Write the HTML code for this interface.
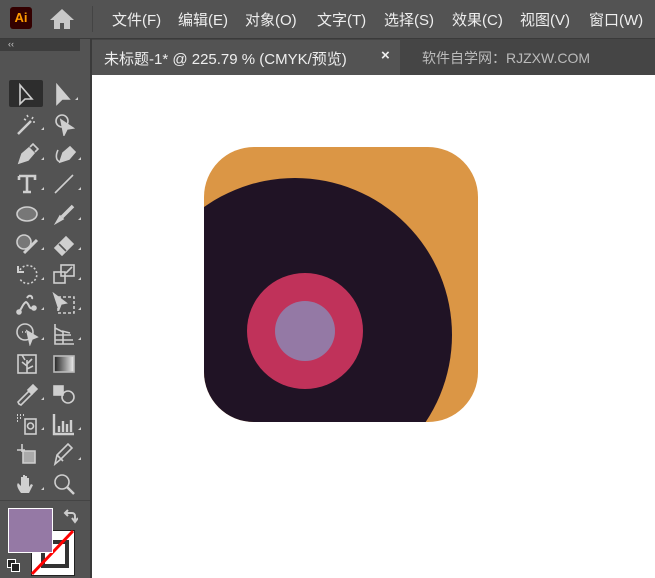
<!DOCTYPE html><html><head><style>
body{margin:0;width:655px;height:578px;overflow:hidden;background:#fff;font-family:"Liberation Sans","Noto Sans CJK SC",sans-serif;position:relative}
.mb{position:absolute;left:0;top:0;width:655px;height:38px;background:#535353;border-bottom:1px solid #3a3a3a}
.mb span{position:absolute;top:9px;color:#eee;font-size:15px}
.tb{position:absolute;left:0;top:39px;width:655px;height:36px;background:#454545}
.tab{position:absolute;left:92px;top:40px;width:308px;height:35px;background:#535353;color:#eee;font-size:15px}
.tools{position:absolute;left:0;top:39px;width:90px;height:539px;background:#535353;border-right:2px solid #3a3a3a}
.t{position:absolute;width:24px;height:24px}
.t svg{width:24px;height:24px;fill:none;stroke:#cfcfcf;stroke-width:1.6}
</style></head><body>
<div class="mb">
<div style="position:absolute;left:10px;top:7px;width:22px;height:22px;background:#330000;border-radius:3px;color:#ff9a00;font-size:13px;font-weight:bold;text-align:center;line-height:22px">Ai</div>
<svg style="position:absolute;left:49px;top:8px" width="26" height="22"><path d="M13 1L1 12h4v9h6v-6h4v6h6v-9h4z" fill="#c8c8c8"/></svg>
<div style="position:absolute;left:92px;top:6px;width:1px;height:26px;background:#444"></div>
<span style="left:112px">文件(F)</span><span style="left:178px">编辑(E)</span><span style="left:245px">对象(O)</span><span style="left:317px">文字(T)</span><span style="left:384px">选择(S)</span><span style="left:452px">效果(C)</span><span style="left:520px">视图(V)</span><span style="left:589px">窗口(W)</span>
</div>
<div class="tb"></div>
<div class="tab"><span style="position:absolute;left:12px;top:8px">未标题-1* @ 225.79 % (CMYK/预览)</span><span style="position:absolute;left:289px;top:7px;font-weight:bold">×</span></div>
<div style="position:absolute;left:422px;top:48px;color:#bbb;font-size:14px">软件自学网：RJZXW.COM</div>
<div class="tools">
<div style="position:absolute;left:0;top:0;width:72px;height:12px;background:#3d3d3d;color:#ccc;font-size:9px;padding-left:8px">‹‹</div>
<div style="position:absolute;left:9px;top:41px;width:34px;height:27px;background:#2d2d2d;border-radius:2px"></div>
</div>
<!-- tools: rows at y=95+30i, cols x 27 / 64 -->
<div class="t" style="left:15px;top:83px"><svg><path d="M5 2v19l5-5h7z"/></svg></div>
<div class="t" style="left:52px;top:83px"><svg><path d="M5 2v19l5-5h7z" fill="#cfcfcf"/></svg></div>
<div class="t" style="left:15px;top:112px"><svg><path d="M3 22L16 9" stroke-width="2.5"/><path d="M12 3l1 2M18 5l-1 2M20 10l-2 0M9 7l2 1"/></svg></div>
<div class="t" style="left:52px;top:112px"><svg><circle cx="10" cy="9" r="6"/><path d="M9 8l12 8-6 1-3 6z" fill="#cfcfcf"/></svg></div>
<div class="t" style="left:15px;top:142px"><svg><path d="M4 21l3-9 7-6 5 5-6 7z" fill="#cfcfcf"/><path d="M15 5l3-3 5 5-3 3"/></svg></div>
<div class="t" style="left:52px;top:142px"><svg><path d="M8 20l3-9 7-6 5 5-6 7z" fill="#cfcfcf"/><path d="M8 20c-5-2-4-8-2-12"/></svg></div>
<div class="t" style="left:15px;top:172px"><svg><path d="M4 4h16v4M12 4v16M8 20h8M4 4v4" stroke-width="2.6"/></svg></div>
<div class="t" style="left:52px;top:172px"><svg><path d="M3 21L21 3"/></svg></div>
<div class="t" style="left:15px;top:202px"><svg><ellipse cx="12" cy="12" rx="10" ry="7" fill="#777"/></svg></div>
<div class="t" style="left:52px;top:202px"><svg><path d="M4 21l4-7 3 3z" fill="#cfcfcf"/><path d="M10 15L21 4" stroke-width="3.5"/></svg></div>
<div class="t" style="left:15px;top:232px"><svg><circle cx="9" cy="10" r="7" fill="#777"/><path d="M9 21L22 8" stroke-width="3"/></svg></div>
<div class="t" style="left:52px;top:232px"><svg><path d="M3 16L14 5l7 7-11 11z" fill="#cfcfcf"/><path d="M7 12l7 7" stroke="#535353"/></svg></div>
<div class="t" style="left:15px;top:262px"><svg><path d="M5 8a9 9 0 1 1 0 9" stroke-dasharray="2 2"/><path d="M3 4v6h6" stroke-width="2"/></svg></div>
<div class="t" style="left:52px;top:262px"><svg><rect x="2" y="10" width="11" height="11"/><rect x="9" y="3" width="13" height="11"/><path d="M14 11l6-6"/></svg></div>
<div class="t" style="left:15px;top:292px"><svg><path d="M3 20c4-2 4-8 8-10 4 2 2 8 8 6M12 6c2-4 6-2 5 1" stroke-width="2"/><circle cx="4" cy="20" r="2" fill="#cfcfcf"/><circle cx="19" cy="16" r="2" fill="#cfcfcf"/></svg></div>
<div class="t" style="left:52px;top:292px"><svg><rect x="6" y="5" width="16" height="16" stroke-dasharray="3 2"/><path d="M2 2l12 9-5 1-2 5z" fill="#cfcfcf"/></svg></div>
<div class="t" style="left:15px;top:322px"><svg><circle cx="10" cy="10" r="8"/><path d="M7 10h6" stroke-dasharray="1 2"/><path d="M12 9l10 6-5 2-2 5z" fill="#cfcfcf"/></svg></div>
<div class="t" style="left:52px;top:322px"><svg><path d="M3 2v20h19M3 6l8 4v12M3 13h16M3 18h18M10 9l8 2"/></svg></div>
<div class="t" style="left:15px;top:352px"><svg><rect x="3" y="3" width="18" height="18"/><path d="M12 21V8M12 14l-5-4M12 12l5-5M12 17l6-3M7 3l3 5"/></svg></div>
<div class="t" style="left:52px;top:352px"><svg><defs><linearGradient id="g"><stop offset="0" stop-color="#222"/><stop offset="1" stop-color="#eee"/></linearGradient></defs><rect x="2" y="4" width="20" height="16" fill="url(#g)" stroke="#bbb"/></svg></div>
<div class="t" style="left:15px;top:382px"><svg><path d="M4 22l-1-2 11-11 3 3-11 11z"/><path d="M13 8l5-5 4 4-5 5z" fill="#cfcfcf"/></svg></div>
<div class="t" style="left:52px;top:382px"><svg><rect x="2" y="4" width="9" height="9" fill="#cfcfcf"/><circle cx="16" cy="15" r="6"/></svg></div>
<div class="t" style="left:15px;top:412px"><svg><rect x="10" y="7" width="11" height="15"/><circle cx="15.5" cy="14" r="3"/><path d="M2 3h1M5 3h1M8 3h1M2 6h1M5 6h1M2 9h1" stroke-width="2"/></svg></div>
<div class="t" style="left:52px;top:412px"><svg><path d="M2 2v20h20M7 20v-6M11 20v-11M15 20v-8M19 20v-12" stroke-width="2.4"/></svg></div>
<div class="t" style="left:15px;top:442px"><svg><path d="M8 9h12v12h-12z" fill="#aaa"/><path d="M7 2v8M2 8h8"/></svg></div>
<div class="t" style="left:52px;top:442px"><svg><path d="M3 22l2-9 11-11 4 4-11 11z"/><path d="M5 13l6 6"/></svg></div>
<div class="t" style="left:15px;top:472px"><svg><path d="M6 21c-3-4-5-8-3-10l3 3V5h2v7V3h2v9V4h2v8V6h2v9l2-3 2 1-4 8z" fill="#cfcfcf" stroke="none"/></svg></div>
<div class="t" style="left:52px;top:472px"><svg><circle cx="10" cy="10" r="7"/><path d="M15 15l7 7" stroke-width="2.5"/></svg></div>
<svg style="position:absolute;left:0;top:0" width="92" height="578" fill="#cfcfcf">
<path d="M75 100l3 0 0-3z M41 130l3 0 0-3z M41 160l3 0 0-3z M78 160l3 0 0-3z M41 190l3 0 0-3z M78 190l3 0 0-3z M41 220l3 0 0-3z M78 220l3 0 0-3z M41 250l3 0 0-3z M78 250l3 0 0-3z M41 280l3 0 0-3z M78 280l3 0 0-3z M41 310l3 0 0-3z M78 310l3 0 0-3z M41 340l3 0 0-3z M78 340l3 0 0-3z M41 400l3 0 0-3z M41 430l3 0 0-3z M78 430l3 0 0-3z M78 460l3 0 0-3z M41 490l3 0 0-3z"/>
</svg>
<div style="position:absolute;left:0;top:500px;width:90px;height:1px;background:#444"></div>
<div style="position:absolute;left:31px;top:530px;width:42px;height:44px;background:#fff;border:1px solid #222"></div>
<div style="position:absolute;left:41px;top:540px;width:20px;height:20px;border:4px solid #333;background:#fff"></div>
<svg style="position:absolute;left:30px;top:529px" width="45" height="47"><path d="M2 45L43 2" stroke="#f00" stroke-width="3"/></svg>
<div style="position:absolute;left:8px;top:508px;width:43px;height:43px;background:#9579a5;border:1px solid #fff"></div>
<svg style="position:absolute;left:62px;top:508px" width="16" height="16"><path d="M3 5h7a3 3 0 0 1 3 3v5M10 10l3 4 3-4M6 2l-3 3 3 3" fill="none" stroke="#ccc" stroke-width="2"/></svg>
<div style="position:absolute;left:7px;top:559px;width:7px;height:7px;border:1.5px solid #fff;background:#222"></div>
<div style="position:absolute;left:11px;top:563px;width:7px;height:7px;border:1.5px solid #fff;background:#222"></div>
<svg style="position:absolute;left:0;top:0" width="655" height="578">
<defs><clipPath id="c"><rect x="204" y="147" width="274" height="275" rx="50"/></clipPath></defs>
<rect x="204" y="147" width="274" height="275" rx="50" fill="#db9645"/>
<circle cx="295" cy="335" r="157" fill="#201325" clip-path="url(#c)"/>
<circle cx="305" cy="331" r="58" fill="#c0325a"/>
<circle cx="305" cy="331" r="30" fill="#9479a5"/>
</svg>
</body></html>
